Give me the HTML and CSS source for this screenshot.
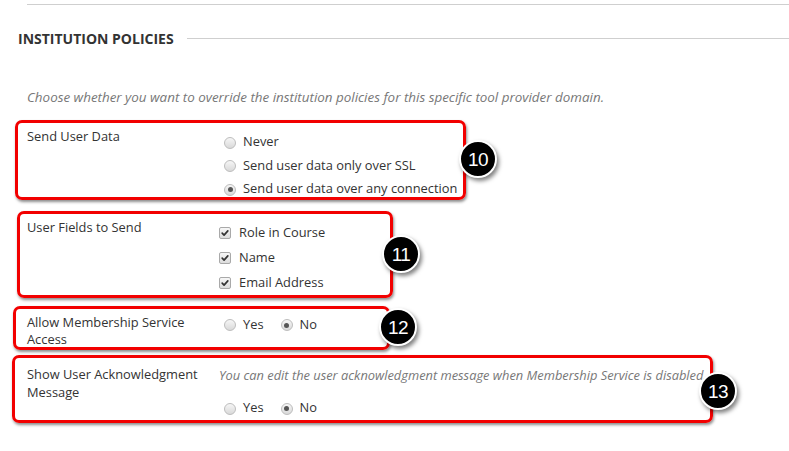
FILE: index.html
```html
<!DOCTYPE html>
<html>
<head>
<meta charset="utf-8">
<link rel="stylesheet" href="styles.css">
</head>
<body>
<div class="page">
  <div class="top-rule"></div>
  <h2 class="section-title"><span>INSTITUTION POLICIES</span></h2>
  <p class="intro">Choose whether you want to override the institution policies for this specific tool provider domain.</p>

  <div class="field field-data">
    <div class="field-label">Send User Data</div>
    <div class="field-options stacked">
      <div class="opt"><span class="radio"></span>Never</div>
      <div class="opt"><span class="radio"></span>Send user data only over SSL</div>
      <div class="opt"><span class="radio checked"></span>Send user data over any connection</div>
    </div>
    <span class="badge badge-10">10</span>
  </div>

  <div class="field field-fields">
    <div class="field-label">User Fields to Send</div>
    <div class="field-options stacked checks">
      <div class="opt"><span class="check"><svg viewBox="0 0 12 12"><path d="M2.6 6.2 L4.9 8.6 L9.4 3.4" /></svg></span>Role in Course</div>
      <div class="opt"><span class="check"><svg viewBox="0 0 12 12"><path d="M2.6 6.2 L4.9 8.6 L9.4 3.4" /></svg></span>Name</div>
      <div class="opt"><span class="check"><svg viewBox="0 0 12 12"><path d="M2.6 6.2 L4.9 8.6 L9.4 3.4" /></svg></span>Email Address</div>
    </div>
    <span class="badge badge-11">11</span>
  </div>

  <div class="field field-member">
    <div class="field-label">Allow Membership Service<br>Access</div>
    <div class="field-options inline">
      <div class="opt"><span class="radio"></span>Yes</div>
      <div class="opt"><span class="radio checked"></span>No</div>
    </div>
    <span class="badge badge-12">12</span>
  </div>

  <div class="field field-ack">
    <div class="field-label">Show User Acknowledgment<br>Message</div>
    <div class="field-options">
      <div class="note">You can edit the user acknowledgment message when Membership Service is disabled.</div>
      <div class="inline">
        <div class="opt"><span class="radio"></span>Yes</div>
        <div class="opt"><span class="radio checked"></span>No</div>
      </div>
    </div>
    <span class="badge badge-13">13</span>
  </div>
</div>
</body>
</html>
```

FILE: styles.css
```css
* { box-sizing: border-box; }

html, body {
  margin: 0;
  padding: 0;
  background: #ffffff;
}

body {
  font-family: "Open Sans", "Noto Sans", sans-serif;
  font-size: 12.85px;
  color: #333333;
  width: 789px;
  height: 451px;
  overflow: hidden;
}

.page {
  padding-top: 4px;
}

.top-rule {
  margin-left: 27px;
  border-top: 1px solid #cfcfcf;
}

.section-title {
  display: flex;
  align-items: center;
  gap: 13px;
  margin: 25px 0 0 18px;
  font-size: 14px;
  font-weight: 700;
  line-height: 17px;
  color: #333333;
}

.section-title::after {
  content: "";
  flex: 1;
  border-top: 1px solid #cfcfcf;
}

.intro {
  margin: 41.5px 0 0 27px;
  font-size: 13.4px;
  font-style: italic;
  line-height: 17px;
  color: #777777;
}

.field {
  position: relative;
  display: grid;
  grid-template-columns: 192px 1fr;
  align-items: start;
  border: 3px solid #f20000;
  border-radius: 7px;
  box-shadow: 1px 2px 3px rgba(0, 0, 0, 0.45);
  line-height: 17px;
}

.field-label {
  line-height: 17px;
}

.field-data {
  margin: 14.5px 0 0 15px;
  width: 451px;
  height: 80px;
  padding: 5px 0 0 9px;
}

.field-fields {
  margin: 11px 0 0 17px;
  width: 376px;
  height: 87px;
  padding: 5px 0 0 7px;
}

.field-member {
  margin: 8px 0 0 13px;
  width: 377px;
  height: 44px;
  padding: 4.5px 0 0 11px;
}

.field-ack {
  margin: 5px 0 0 12px;
  width: 701px;
  height: 68px;
  padding: 7px 0 0 12px;
}

.field-ack .field-label {
  line-height: 18px;
}

.field-member .field-label {
  line-height: 17.5px;
}

.stacked {
  display: flex;
  flex-direction: column;
  gap: 6.5px;
  padding-top: 5px;
}

.checks {
  gap: 8px;
}

.inline {
  display: flex;
  gap: 12px;
}

.field-member .inline {
  padding-top: 2px;
}

.opt {
  display: flex;
  align-items: center;
  gap: 7px;
  line-height: 17px;
  white-space: nowrap;
}

.checks .opt {
  gap: 8px;
}

.radio {
  position: relative;
  flex: none;
  width: 12px;
  height: 12px;
  margin-left: 5px;
  margin-top: 2px;
  border-radius: 50%;
  border: 1px solid #bdbdbd;
  background: linear-gradient(#f6f6f6, #d9d9d9);
}

.radio.checked::after {
  content: "";
  position: absolute;
  left: 2.5px;
  top: 2.5px;
  width: 5px;
  height: 5px;
  border-radius: 50%;
  background: #555555;
}

.check {
  flex: none;
  width: 12px;
  height: 12px;
  margin-top: 1px;
  border-radius: 2px;
  border: 1px solid #a9a9a9;
  background: linear-gradient(#f7f7f7, #dcdcdc);
  display: flex;
}

.check svg {
  width: 10px;
  height: 10px;
  fill: none;
  stroke: #333333;
  stroke-width: 2;
  stroke-linecap: round;
  stroke-linejoin: round;
}

.note {
  margin-top: 2px;
  font-style: italic;
  color: #777777;
  line-height: 17px;
  white-space: nowrap;
}

.field-ack .inline {
  margin-top: 15px;
}

.badge {
  position: absolute;
  width: 38px;
  height: 38px;
  border-radius: 50%;
  background: #000000;
  border: 2.5px solid #ffffff;
  box-shadow: 2px 3px 4px rgba(0, 0, 0, 0.5);
  color: #ffffff;
  font-family: "Liberation Sans", Arial, sans-serif;
  font-size: 19px;
  letter-spacing: -0.5px;
  display: flex;
  align-items: center;
  justify-content: center;
  line-height: 1;
}

.badge-10 { right: -34px; top: 17px; }
.badge-11 { right: -30px; top: 21px; }
.badge-12 { right: -30px; top: -1px; }
.badge-13 { right: -27px; top: 14px; }
```
